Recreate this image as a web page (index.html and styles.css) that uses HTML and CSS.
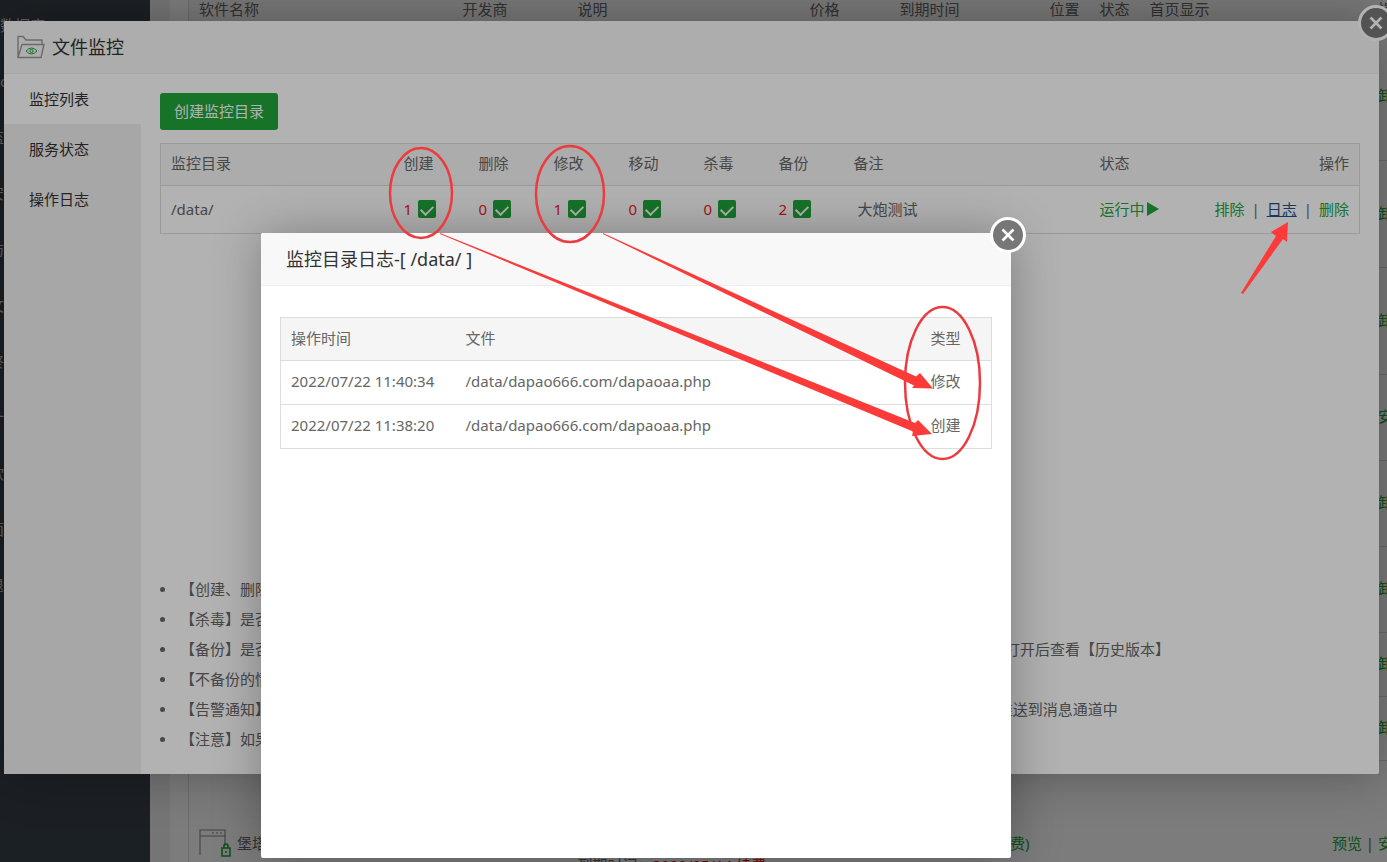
FILE: index.html
```
<!DOCTYPE html>
<html lang="zh-CN">
<head>
<meta charset="utf-8">
<title>文件监控</title>
<link rel="stylesheet" href="styles.css">
</head>
<body>
<div class="page">
  <nav class="side">
    <a class="side-link side-link-wide" href="#">数据库</a>
    <a class="side-link" href="#">Docker</a>
    <a class="side-link" href="#">监控</a>
    <a class="side-link" href="#">安全</a>
    <a class="side-link" href="#">防火墙</a>
    <a class="side-link" href="#">文件</a>
    <a class="side-link" href="#">终端</a>
    <a class="side-link" href="#">计划任务</a>
    <a class="side-link" href="#">软件商店</a>
    <a class="side-link" href="#">面板设置</a>
    <a class="side-link" href="#">退出</a>
  </nav>
  <main class="main">
    <div class="card">
      <table class="soft">
        <colgroup><col class="s-name"><col class="s-dev"><col class="s-desc"><col class="s-price"><col class="s-date"><col class="s-pos"><col class="s-pos"><col class="s-home"><col></colgroup>
        <thead>
          <tr><th>软件名称</th><th>开发商</th><th>说明</th><th>价格</th><th>到期时间</th><th>位置</th><th>状态</th><th>首页显示</th><th class="right">操作</th></tr>
        </thead>
        <tbody>
          <tr class="h128"><td colspan="9" class="right"><a href="#">卸载</a></td></tr>
          <tr class="h107"><td colspan="9" class="right"><a href="#">卸载</a></td></tr>
          <tr class="h107"><td colspan="9" class="right"><a href="#">卸载</a></td></tr>
          <tr class="h86"><td colspan="9" class="right"><a href="#">安装</a></td></tr>
          <tr class="h86"><td colspan="9" class="right"><a href="#">卸载</a></td></tr>
          <tr class="h86"><td colspan="9" class="right"><a href="#">卸载</a></td></tr>
          <tr class="h64"><td colspan="9" class="right"><a href="#">卸载</a></td></tr>
          <tr class="h64"><td colspan="9" class="right"><a href="#">卸载</a></td></tr>
          <tr class="h170">
            <td>
              <div class="soft-name">
                <svg class="soft-icon" viewBox="0 0 32 28" aria-hidden="true">
                  <path d="M1 26V1h25v16M1 7h25M13 4h2M17 4h2M21 4h2" fill="none" stroke="#8c8c9c" stroke-width="1.2"/>
                  <path d="M23 19h8v8h-8zM25 19v-2a2 2 0 0 1 4 0v2M27 22v2" fill="none" stroke="#20a53a" stroke-width="1.6"/>
                </svg>
                <span>堡塔防篡改</span>
              </div>
            </td>
            <td>官方</td>
            <td>文件防护<br>实时拦截<br>到期时间：<span class="red">2029/05/14 续费</span></td>
            <td>免费</td>
            <td class="right"><a href="#">(续费)</a></td>
            <td></td><td></td><td></td>
            <td class="right"><a href="#">预览</a> | <a href="#">安装</a></td>
          </tr>
        </tbody>
      </table>
    </div>
  </main>
</div>

<div class="mask"></div>

<section class="dialog monitor" aria-label="文件监控">
  <header class="dialog-head">
    <svg class="folder" viewBox="0 0 28 24" aria-hidden="true">
      <path d="M1 22.500V1.500h5l3 3.500h16v4M1 22.500L5 9.500h22l-3 13z" fill="none" stroke="#999" stroke-width="1.400" stroke-linejoin="round"/>
      <path d="M9 16q5.500-6 11 0q-5.500 6-11 0z" fill="none" stroke="#20a53a" stroke-width="1"/>
      <circle cx="14.500" cy="16" r="1.600" fill="none" stroke="#20a53a" stroke-width="1"/>
    </svg>
    <h2 class="dialog-title">文件监控</h2>
  </header>
  <button class="close" type="button" aria-label="关闭"><svg viewBox="0 0 36 36" aria-hidden="true"><circle cx="18" cy="18" r="16.500" fill="#777" stroke="#fff" stroke-width="3"/><path d="M12.500 12.500l11 11M23.500 12.500l-11 11" stroke="#fff" stroke-width="2.600"/></svg></button>
  <div class="monitor-body">
    <nav class="tabs">
      <a class="tab tab-on" href="#">监控列表</a>
      <a class="tab" href="#">服务状态</a>
      <a class="tab" href="#">操作日志</a>
    </nav>
    <div class="content">
      <button class="create" type="button">创建监控目录</button>
      <table class="grid dirs">
        <colgroup><col class="d-path"><col class="d-flag"><col class="d-flag"><col class="d-flag"><col class="d-flag"><col class="d-flag"><col class="d-flag"><col><col class="d-state"><col class="d-ops"></colgroup>
        <thead>
          <tr><th>监控目录</th><th>创建</th><th>删除</th><th>修改</th><th>移动</th><th>杀毒</th><th>备份</th><th>备注</th><th>状态</th><th class="right">操作</th></tr>
        </thead>
        <tbody>
          <tr>
            <td>/data/</td>
            <td><label class="flag"><span>1</span><input type="checkbox" checked></label></td>
            <td><label class="flag"><span>0</span><input type="checkbox" checked></label></td>
            <td><label class="flag"><span>1</span><input type="checkbox" checked></label></td>
            <td><label class="flag"><span>0</span><input type="checkbox" checked></label></td>
            <td><label class="flag"><span>0</span><input type="checkbox" checked></label></td>
            <td><label class="flag"><span>2</span><input type="checkbox" checked></label></td>
            <td><input class="note" type="text" value="大炮测试" aria-label="备注"></td>
            <td><a class="state" href="#">运行中<svg viewBox="0 0 12 14" aria-hidden="true"><path d="M0 0L12 7L0 14z" fill="#20a53a"/></svg></a></td>
            <td><div class="ops"><a href="#">排除</a><span>|</span><a class="hover" href="#">日志</a><span>|</span><a href="#">删除</a></div></td>
          </tr>
        </tbody>
      </table>
      <ul class="notes">
        <li>【创建、删除、修改、移动】是否监控对应的文件操作</li>
        <li>【杀毒】是否对新增文件进行查杀</li>
        <li>【备份】是否备份被修改或被删除的文件，开启后监控目录中的文件发生变动时会自动保存一份副本，可在文件管理中将文件打开后查看【历史版本】</li>
        <li>【不备份的情况】文件过大时不会备份</li>
        <li>【告警通知】开启后当监控目录中的文件发生创建 修改 删除等操作时，会把详细信息通过面板设置中配置好的告警方式自动推送到消息通道中</li>
        <li>【注意】如果目录文件过多请先排除</li>
      </ul>
    </div>
  </div>
</section>

<div class="mask"></div>

<section class="dialog log" aria-label="监控目录日志">
  <header class="dialog-head log-head">
    <h2 class="dialog-title">监控目录日志-[ /data/ ]</h2>
  </header>
  <button class="close" type="button" aria-label="关闭"><svg viewBox="0 0 36 36" aria-hidden="true"><circle cx="18" cy="18" r="16.500" fill="#777" stroke="#fff" stroke-width="3"/><path d="M12.500 12.500l11 11M23.500 12.500l-11 11" stroke="#fff" stroke-width="2.600"/></svg></button>
  <div class="log-body">
    <table class="grid logs">
      <colgroup><col class="l-time"><col><col class="l-type"></colgroup>
      <thead><tr><th>操作时间</th><th>文件</th><th>类型</th></tr></thead>
      <tbody>
        <tr><td>2022/07/22 11:40:34</td><td>/data/dapao666.com/dapaoaa.php</td><td>修改</td></tr>
        <tr><td>2022/07/22 11:38:20</td><td>/data/dapao666.com/dapaoaa.php</td><td>创建</td></tr>
      </tbody>
    </table>
  </div>
</section>

<svg class="marks" width="1387" height="862" viewBox="0 0 1387 862" aria-hidden="true">
  <g fill="none" stroke="#eb3b3f" stroke-width="2.500">
    <ellipse cx="421" cy="193" rx="31" ry="45"/>
    <ellipse cx="570" cy="194" rx="34" ry="48"/>
    <ellipse cx="942.500" cy="383" rx="37.500" ry="76"/>
  </g>
  <g fill="#fb3a3a">
    <path d="M440 233L915 423L918 420L932 434L912 436L913 431.500L440 234z"/>
    <path d="M603 233L916 376.500L920 373L933 388.500L912 388L914 385.500L603 234z"/>
    <path d="M1241 293L1276 236L1271 232L1288 222L1287 242L1283 239L1243 294z"/>
  </g>
</svg>
</body>
</html>
```
FILE: styles.css
```
* { box-sizing: border-box; }

body {
  margin: 0;
  min-height: 100vh;
  overflow: hidden;
  color: #666;
  font: 15px/20px "Noto Sans", "Noto Sans CJK SC", sans-serif;
}

a { color: #20a53a; text-decoration: none; }
button, input { font: inherit; }
table { border-collapse: collapse; table-layout: fixed; }
th { font-weight: 400; text-align: left; }
th, td { padding: 0 10px 3px; white-space: nowrap; }
.right { text-align: right; }
.red { color: #f00; }

/* Panel page under the dialogs */
.page {
  position: fixed;
  inset: 0;
  display: flex;
  overflow: hidden;
  background: #f1f1f1;
}

.side {
  flex: none;
  display: flex;
  flex-direction: column;
  gap: 16px;
  width: 150px;
  padding-top: 5px;
  background: #3a434b;
}

.side-link {
  height: 40px;
  margin-left: -11px;
  line-height: 40px;
  color: #ccc;
}

.side-link-wide { margin-left: 0; }

.main {
  flex: 1;
  min-width: 0;
  padding-left: 20px;
}

.card {
  display: flow-root;
  height: 100%;
  padding-left: 18px;
  background: #fff;
}

.soft {
  width: calc(100% + 32px);
  margin-top: -12px;
  border: 1px solid #ddd;
  color: #666;
}

.soft tr { border-bottom: 1px solid #ddd; }
.soft thead tr { height: 44px; background: #f6f6f6; }
.soft td { line-height: 22px; }
.s-name { width: 264px; }
.s-dev { width: 115px; }
.s-desc { width: 232px; }
.s-price { width: 90px; }
.s-date { width: 150px; }
.s-pos { width: 50px; }
.s-home { width: 90px; }
.h64 { height: 64px; }
.h86 { height: 86px; }
.h107 { height: 107px; }
.h128 { height: 128px; }
.h170 { height: 168px; }
.soft-name { display: flex; align-items: center; gap: 6px; }
.soft-icon { width: 32px; height: 28px; }

.mask {
  position: fixed;
  inset: 0;
  background: rgba(0, 0, 0, .3);
}

/* Dialog windows */
.dialog {
  position: fixed;
  display: flex;
  flex-direction: column;
  border-radius: 2px;
  background: #fff;
  box-shadow: 1px 1px 50px rgba(0, 0, 0, .3);
}

.monitor { top: 21px; right: 8px; bottom: 88px; left: 4px; }
.log { top: 233px; bottom: 4px; left: 261px; width: 750px; }

.dialog-head {
  display: flex;
  align-items: center;
  gap: 7px;
  height: 53px;
  padding: 0 13px;
  border-bottom: 1px solid #eee;
  border-radius: 2px 2px 0 0;
  background: #f8f8f8;
}

.log-head { padding: 0 25px; }

.dialog-title {
  margin: 0;
  color: #333;
  font-size: 18px;
  font-weight: 400;
  line-height: 24px;
}

.folder { width: 28px; height: 24px; }

.close {
  position: absolute;
  top: -16px;
  right: -15px;
  width: 36px;
  height: 36px;
  padding: 0;
  border: 0;
  background: none;
}

.close svg { display: block; }

.monitor-body { flex: 1; display: flex; min-height: 0; }

.tabs { flex: none; width: 137px; background: #f0f0f0; }

.tab {
  display: block;
  padding-left: 25px;
  color: #333;
  line-height: 50px;
}

.tab-on { background: #fff; }

.content {
  flex: 1;
  display: flex;
  flex-direction: column;
  align-items: flex-start;
  min-width: 0;
  padding: 19px 19px 20px;
}

.create {
  height: 37px;
  padding: 0 14px 2px;
  border: 0;
  border-radius: 3px;
  background: #20a53a;
  color: #fff;
}

.grid { width: 100%; border: 1px solid #ddd; }
.grid tr { border-bottom: 1px solid #ddd; }
.grid thead { background: #f6f6f6; }

.dirs { margin-top: 13px; }
.dirs thead tr { height: 42px; }
.dirs tbody tr { height: 48px; }
.dirs td { padding-bottom: 1px; }
.d-path { width: 233px; }
.d-flag { width: 75px; }
.d-state { width: 100px; }
.d-ops { width: 170px; }

.flag { display: flex; align-items: center; gap: 6px; color: #ef1c24; }

.flag input {
  appearance: none;
  display: flex;
  justify-content: center;
  width: 18px;
  height: 18px;
  margin: 0;
  padding-top: 3px;
  border-radius: 2px;
  background: #20a53a;
}

.flag input::after {
  content: "";
  width: 6px;
  height: 10px;
  border: solid #fff;
  border-width: 0 2px 2px 0;
  transform: rotate(45deg);
}

.note {
  display: block;
  width: 100%;
  padding: 0 4px;
  border: 0;
  background: none;
  color: #666;
}

.state { display: flex; align-items: center; gap: 2px; }
.state svg { width: 12px; height: 14px; }
.ops { display: flex; justify-content: flex-end; gap: 7px; }
.ops .hover { color: #1d5189; text-decoration: underline; }

.notes {
  margin: auto 0 0;
  padding: 0;
  line-height: 30px;
  list-style: none;
  white-space: nowrap;
}

.notes li { display: flex; align-items: center; }

.notes li::before {
  content: "";
  width: 5px;
  height: 5px;
  margin-right: 15px;
  border-radius: 50%;
  background: #666;
}

.log-body { padding: 31px 19px; }
.logs tr { height: 44px; }
.logs thead tr { height: 43px; }
.logs thead { background: #f5f5f5; }
.l-time { width: 175px; }
.l-type { width: 71px; }

.marks {
  position: fixed;
  top: 0;
  left: 0;
  pointer-events: none;
}
```
